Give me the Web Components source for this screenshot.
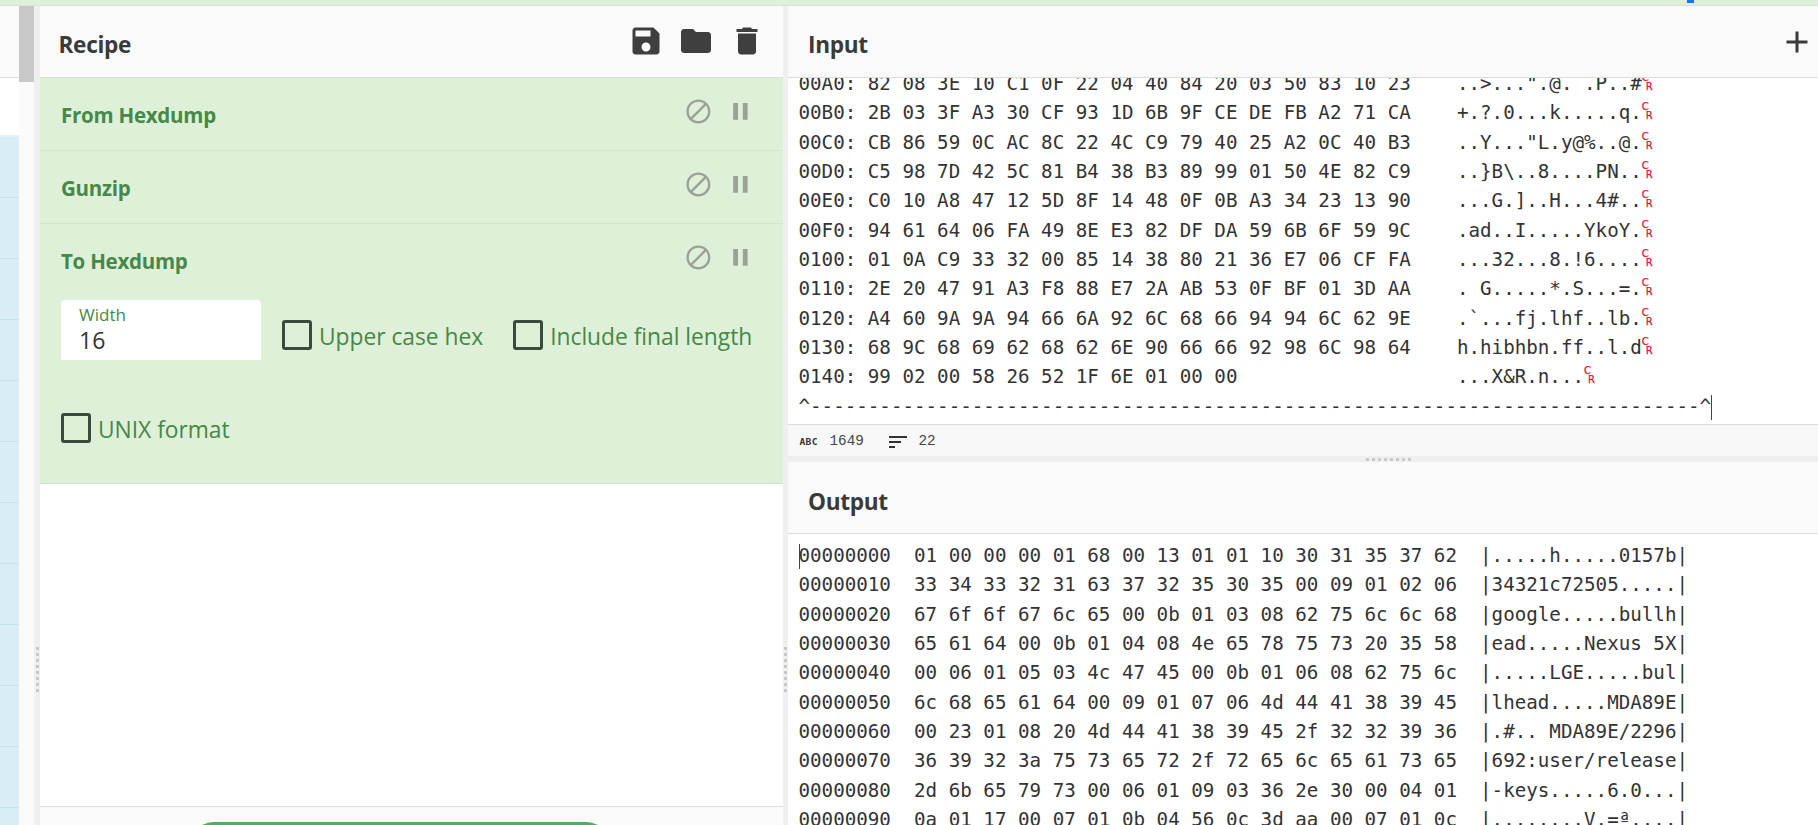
<!DOCTYPE html>
<html lang="en"><head><meta charset="utf-8"><title>Recipe</title>
<style>
html,body{margin:0;padding:0;height:825px;overflow:hidden;background:#fff}
body{font-family:"Open Sans","Liberation Sans",sans-serif;color:#333}
</style></head>
<body>
<cc-app>
  <cc-side slot="side"></cc-side>
  <recipe-pane slot="recipe">
    <op-row name="From Hexdump"></op-row>
    <op-row name="Gunzip"></op-row>
    <op-row name="To Hexdump" open>
      <arg-input label="Width" value="16"></arg-input>
      <arg-check label="Upper case hex"></arg-check>
      <arg-check label="Include final length"></arg-check>
      <arg-check label="UNIX format"></arg-check>
    </op-row>
  </recipe-pane>
  <io-pane slot="input" name="Input" plus status offset="-9" style="height:450px">
<hex-line cr>00A0: 82 08 3E 10 C1 0F 22 04 40 84 20 03 50 83 10 23    ..&gt;...".@. .P..#</hex-line>
<hex-line cr>00B0: 2B 03 3F A3 30 CF 93 1D 6B 9F CE DE FB A2 71 CA    +.?.0...k.....q.</hex-line>
<hex-line cr>00C0: CB 86 59 0C AC 8C 22 4C C9 79 40 25 A2 0C 40 B3    ..Y..."L.y@%..@.</hex-line>
<hex-line cr>00D0: C5 98 7D 42 5C 81 B4 38 B3 89 99 01 50 4E 82 C9    ..}B\..8....PN..</hex-line>
<hex-line cr>00E0: C0 10 A8 47 12 5D 8F 14 48 0F 0B A3 34 23 13 90    ...G.]..H...4#..</hex-line>
<hex-line cr>00F0: 94 61 64 06 FA 49 8E E3 82 DF DA 59 6B 6F 59 9C    .ad..I.....YkoY.</hex-line>
<hex-line cr>0100: 01 0A C9 33 32 00 85 14 38 80 21 36 E7 06 CF FA    ...32...8.!6....</hex-line>
<hex-line cr>0110: 2E 20 47 91 A3 F8 88 E7 2A AB 53 0F BF 01 3D AA    . G.....*.S...=.</hex-line>
<hex-line cr>0120: A4 60 9A 9A 94 66 6A 92 6C 68 66 94 94 6C 62 9E    .`...fj.lhf..lb.</hex-line>
<hex-line cr>0130: 68 9C 68 69 62 68 62 6E 90 66 66 92 98 6C 98 64    h.hibhbn.ff..l.d</hex-line>
<hex-line cr>0140: 99 02 00 58 26 52 1F 6E 01 00 00                   ...X&amp;R.n...</hex-line>
<hex-line caret-end>^-----------------------------------------------------------------------------^</hex-line>
  </io-pane>
  <io-pane slot="output" name="Output" offset="7" style="flex:1;min-height:0;--tp:9px">
<hex-line caret-start>00000000  01 00 00 00 01 68 00 13 01 01 10 30 31 35 37 62  |.....h.....0157b|</hex-line>
<hex-line>00000010  33 34 33 32 31 63 37 32 35 30 35 00 09 01 02 06  |34321c72505.....|</hex-line>
<hex-line>00000020  67 6f 6f 67 6c 65 00 0b 01 03 08 62 75 6c 6c 68  |google.....bullh|</hex-line>
<hex-line>00000030  65 61 64 00 0b 01 04 08 4e 65 78 75 73 20 35 58  |ead.....Nexus 5X|</hex-line>
<hex-line>00000040  00 06 01 05 03 4c 47 45 00 0b 01 06 08 62 75 6c  |.....LGE.....bul|</hex-line>
<hex-line>00000050  6c 68 65 61 64 00 09 01 07 06 4d 44 41 38 39 45  |lhead.....MDA89E|</hex-line>
<hex-line>00000060  00 23 01 08 20 4d 44 41 38 39 45 2f 32 32 39 36  |.#.. MDA89E/2296|</hex-line>
<hex-line>00000070  36 39 32 3a 75 73 65 72 2f 72 65 6c 65 61 73 65  |692:user/release|</hex-line>
<hex-line>00000080  2d 6b 65 79 73 00 06 01 09 03 36 2e 30 00 04 01  |-keys.....6.0...|</hex-line>
<hex-line>00000090  0a 01 17 00 07 01 0b 04 56 0c 3d aa 00 07 01 0c  |........V.=ª....|</hex-line>
  </io-pane>
</cc-app>
<script>
const MONO='"DejaVu Sans Mono","Liberation Mono",monospace';
const UI='"Open Sans","Liberation Sans",sans-serif';
const icon=(d,size,color)=>`<svg width="${size}" height="${size}" viewBox="0 0 24 24" fill="${color}" aria-hidden="true"><path d="${d}"/></svg>`;
const P={
 save:"M17 3H5c-1.11 0-2 .9-2 2v14c0 1.1.89 2 2 2h14c1.1 0 2-.9 2-2V7l-4-4zm-5 16c-1.66 0-3-1.34-3-3s1.34-3 3-3 3 1.34 3 3-1.34 3-3 3zm3-10H5V5h10v4z",
 folder:"M10 4H4c-1.1 0-1.99.9-1.99 2L2 18c0 1.1.9 2 2 2h16c1.1 0 2-.9 2-2V8c0-1.1-.9-2-2-2h-8l-2-2z",
 trash:"M6 19c0 1.1.9 2 2 2h8c1.1 0 2-.9 2-2V7H6v12zM19 4h-3.5l-1-1h-5l-1 1H5v2h14V4z",
 block:"M12 2C6.48 2 2 6.48 2 12s4.48 10 10 10 10-4.48 10-10S17.52 2 12 2zM4 12c0-4.42 3.58-8 8-8 1.85 0 3.55.63 4.9 1.69L5.69 16.9C4.63 15.55 4 13.85 4 12zm8 8c-1.85 0-3.55-.63-4.9-1.69L18.31 7.1C19.37 8.45 20 10.15 20 12c0 4.42-3.58 8-8 8z",
 pause:"M6 19h4V5H6v14zm8-14v14h4V5h-4z",
 add:"M19 13h-6v6h-2v-6H5v-2h6V5h2v6h6v2z",
 sort:"M3 18h6v-2H3v2zM3 6v2h18V6H3zm0 7h12v-2H3v2z"
};
function shadow(el,html){el.attachShadow({mode:"open"}).innerHTML=html;}

customElements.define("cc-app",class extends HTMLElement{constructor(){super();shadow(this,`<style>
:host{display:flex;flex-direction:column;width:1818px;height:825px;position:relative}
.top{height:5px;background:#dff0d8;border-bottom:1px solid #d3e6cb;flex:none}
.mark{position:absolute;left:1687px;top:0;width:7px;height:3px;background:#1a73e8}
.main{flex:1;min-height:0;display:flex}
.col{flex:1;min-width:0;display:flex;flex-direction:column}
</style><div class="top"></div><div class="mark"></div>
<div class="main"><slot name="side"></slot><pane-gutter></pane-gutter><slot name="recipe"></slot><pane-gutter narrow></pane-gutter>
<div class="col"><slot name="input"></slot><row-gutter></row-gutter><slot name="output"></slot></div></div>`);}});

customElements.define("pane-gutter",class extends HTMLElement{constructor(){super();shadow(this,`<style>
:host{flex:none;width:6px;background:#efefef;display:block;position:relative}
:host([narrow]){width:5px}
.dots{position:absolute;left:2px;top:641px;width:3px;height:47px;background:repeating-linear-gradient(to bottom,#c9c9c9 0 3px,transparent 3px 6px)}
:host([narrow]) .dots{left:1px}
</style><div class="dots"></div>`);}});

customElements.define("row-gutter",class extends HTMLElement{constructor(){super();shadow(this,`<style>
:host{flex:none;height:6px;background:#efefef;display:flex;justify-content:center;align-items:center;padding-left:172px}
.dots{width:47px;height:3px;margin-left:0;background:repeating-linear-gradient(to right,#c9c9c9 0 3px,transparent 3px 6px)}
</style><div class="dots"></div>`);}});

customElements.define("cc-side",class extends HTMLElement{constructor(){super();shadow(this,`<style>
:host{flex:none;width:34px;display:flex}
.list{width:19px;display:flex;flex-direction:column;background:#fff}
.head{height:71px;flex:none;background:#fafafa;border-bottom:1px solid #dcdcdc}
.gap{height:57px;flex:none;background:#fff}
.cap{height:2px;flex:none;background:#e4f2f9}
.rows{flex:1;background:repeating-linear-gradient(to bottom,#d9edf7 0 60px,#c5e3ef 60px 61px)}
.track{width:15px;background:#fafafa}
.thumb{height:76px;background:#c8c8c8}
</style><div class="list"><div class="head"></div><div class="gap"></div><div class="cap"></div><div class="rows"></div></div><div class="track"><div class="thumb"></div></div>`);}});

customElements.define("recipe-pane",class extends HTMLElement{constructor(){super();shadow(this,`<style>
:host{flex:none;width:743px;display:flex;flex-direction:column;background:#fff}
header{flex:none;height:71px;background:#fafafa;border-bottom:1px solid #dcdcdc;display:flex;align-items:center;justify-content:space-between;padding:0 18.5px 0 18.5px}
h2{margin:0;font:700 22.6px/1 ${UI};color:#3a3a3a;letter-spacing:-.3px;padding-top:7px}
.tools{display:flex;gap:14.5px;margin-top:-1px}
svg{display:block}
.ops{flex:1;min-height:0}
footer{flex:none;height:3px;border-top:1px solid #ddd;background:#fafafa;overflow:hidden;display:flex;justify-content:center;padding:15px 23px 0 0}
.bake{width:422px;height:50px;border-radius:30px;background:#4cb25a;flex:none}
</style><header><h2>Recipe</h2><div class="tools">${icon(P.save,36,"#3f3f3f")}${icon(P.folder,36,"#3f3f3f")}${icon(P.trash,36,"#3f3f3f")}</div></header>
<div class="ops"><slot></slot></div><footer><div class="bake"></div></footer>`);}});

customElements.define("op-row",class extends HTMLElement{constructor(){super();const n=this.getAttribute("name");shadow(this,`<style>
:host{display:block;background:#dff0d8;border-bottom:1px solid #d3e6cb;color:#468847}
.head{height:72px;display:flex;align-items:center;justify-content:space-between;padding:0 28.5px 0 21px}
.name{font:700 20.5px/1 ${UI};color:#468847;padding-top:2px;letter-spacing:-.25px}
.ico{display:flex;gap:13.4px;margin-top:-5px}
svg{display:block}
.args{display:none;flex-wrap:wrap;gap:33px 21px;padding:4px 0 30px 21px}
:host([open]) .args{display:flex}
</style><div class="head"><div class="name">${n}</div><div class="ico">${icon(P.block,28.8,"#9aa297")}${icon(P.pause,28.8,"#9aa297")}</div></div><div class="args"><slot></slot></div>`);}});

customElements.define("arg-input",class extends HTMLElement{constructor(){super();shadow(this,`<style>
:host{display:block;width:200px;height:60px;box-sizing:border-box;background:#fff;border-radius:4px 4px 0 0;padding:5px 18px 0}
.l{font:400 17px/20px ${UI};color:#468847}
.v{font:400 23px/30px ${UI};color:#333}
</style><div class="l">${this.getAttribute("label")}</div><div class="v">${this.getAttribute("value")}</div>`);}});

customElements.define("arg-check",class extends HTMLElement{constructor(){super();shadow(this,`<style>
:host{display:flex;height:60px;padding-top:20px;box-sizing:border-box;align-items:flex-start;gap:7px;margin-right:9px}
.b{width:30px;height:30px;box-sizing:border-box;border:3px solid #3c4a3e;border-radius:3px;flex:none}
.t{font:400 22.8px/30px ${UI};color:#468847;white-space:nowrap;padding-top:2px;letter-spacing:-.02px}
</style><span class="b"></span><span class="t">${this.getAttribute("label")}</span>`);}});

customElements.define("io-pane",class extends HTMLElement{constructor(){super();const h=this.hasAttribute("status"),off=this.getAttribute("offset")||0;shadow(this,`<style>
:host{display:flex;flex-direction:column;background:#fff;flex:none;min-height:0}
header{flex:none;height:71px;background:#fafafa;border-bottom:1px solid #dcdcdc;display:flex;align-items:center;justify-content:space-between;padding:0 3px 0 20px}
h2{margin:0;font:700 22.6px/1 ${UI};color:#3a3a3a;letter-spacing:-.3px;padding-top:var(--tp,7px)}
svg{display:block}
.add{margin-top:1px}
.body{flex:1;min-height:0;overflow:hidden;padding-left:10.5px}
.in{margin-top:${off}px}
.status{flex:none;height:29px;padding-top:2px;border-top:1px solid #dcdcdc;background:#f8f8f8;display:flex;align-items:center;padding-left:11.5px;font:400 14.3px/1 "Liberation Mono",monospace;color:#444}
.abc{font:700 9.5px/1 "DejaVu Sans Mono",monospace;color:#333;width:18px;letter-spacing:.4px}
.n1{margin-left:12px;width:35px}.s{margin-left:21px;margin-right:9px;width:24px;margin-top:1px}
</style><header><h2>${this.getAttribute("name")}</h2>${this.hasAttribute("plus")?`<div class="add">${icon(P.add,36,"#3a3a3a")}</div>`:""}</header>
<div class="body"><div class="in"><slot></slot></div></div>
${h?`<div class="status"><span class="abc">ABC</span><span class="n1">1649</span><span class="s">${icon(P.sort,24,"#333")}</span><span>22</span></div>`:""}`);}});

customElements.define("hex-line",class extends HTMLElement{constructor(){super();shadow(this,`<style>
:host{display:block;height:29.33px;font:400 19.2px/29.33px ${MONO};color:#333;white-space:pre}
.cr{display:inline-block;position:relative;width:11.55px;height:29px;vertical-align:top;color:#e0162b;font:400 10px/8px "DejaVu Sans",sans-serif}
.cr i{position:absolute;font-style:normal;-webkit-text-stroke:.25px #e0162b}.cr i:first-child{left:0;top:5px}.cr i:last-child{left:4px;top:14px}
.caret{display:inline-block;width:0;height:25px;border-left:1px solid #444;vertical-align:middle;margin-right:-1px}
</style>${this.hasAttribute("caret-start")?'<span class="caret"></span>':""}<slot></slot>${this.hasAttribute("cr")?'<span class="cr"><i>C</i><i>R</i></span>':""}${this.hasAttribute("caret-end")?'<span class="caret"></span>':""}`);}});
</script>
</body></html>
